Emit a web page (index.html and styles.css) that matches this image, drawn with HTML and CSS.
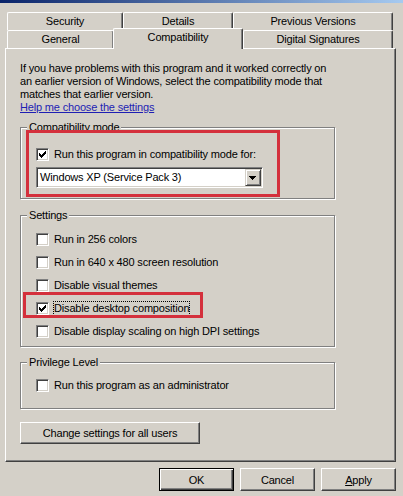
FILE: index.html
```html
<!DOCTYPE html>
<html>
<head>
<meta charset="utf-8">
<link rel="stylesheet" href="styles.css">
</head>
<body>
<div class="titlebar"></div>
<div class="dialog">
  <div class="tabs">
    <div class="tabrow">
      <div class="tab t-sec">Security</div>
      <div class="tab t-det">Details</div>
      <div class="tab t-prev">Previous Versions</div>
    </div>
    <div class="tabrow">
      <div class="tab t-gen">General</div>
      <div class="tab t-comp selected">Compatibility</div>
      <div class="tab t-dig">Digital Signatures</div>
    </div>
  </div>
  <div class="panel">
    <p class="intro">If you have problems with this program and it worked correctly on<br>an earlier version of Windows, select the compatibility mode that<br>matches that earlier version.</p>
    <a class="link">Help me choose the settings</a>

    <fieldset class="group g-compat">
      <legend>Compatibility mode</legend>
      <div class="check">
        <span class="cb"><svg width="11" height="11" viewBox="0 0 11 11" shape-rendering="crispEdges"><path d="M2 4h1v1h1v1h1v-1h1v-1h1v-1h1v-1h1v3h-1v1h-1v1h-1v1h-1v1h-1v-1h-1v-1h-1z" fill="#000"/></svg></span>
        <span class="lbl">Run this program in compatibility mode for:</span>
      </div>
      <div class="combo">
        <span class="combo-text">Windows XP (Service Pack 3)</span>
        <span class="drop"><svg width="7" height="4" viewBox="0 0 7 4" shape-rendering="crispEdges"><path d="M0 0h7v1h-1v1h-1v1h-1v1h-1v-1h-1v-1h-1v-1h-1z" fill="#000"/></svg></span>
      </div>
    </fieldset>

    <fieldset class="group g-settings">
      <legend>Settings</legend>
      <div class="check"><span class="cb"></span><span class="lbl">Run in 256 colors</span></div>
      <div class="check"><span class="cb"></span><span class="lbl">Run in 640 x 480 screen resolution</span></div>
      <div class="check"><span class="cb"></span><span class="lbl">Disable visual themes</span></div>
      <div class="check"><span class="cb"><svg width="11" height="11" viewBox="0 0 11 11" shape-rendering="crispEdges"><path d="M2 4h1v1h1v1h1v-1h1v-1h1v-1h1v-1h1v3h-1v1h-1v1h-1v1h-1v1h-1v-1h-1v-1h-1z" fill="#000"/></svg></span><span class="lbl focus">Disable desktop composition</span></div>
      <div class="check"><span class="cb"></span><span class="lbl">Disable display scaling on high DPI settings</span></div>
    </fieldset>

    <fieldset class="group g-priv">
      <legend>Privilege Level</legend>
      <div class="check"><span class="cb"></span><span class="lbl">Run this program as an administrator</span></div>
    </fieldset>

    <button class="btn btn-all">Change settings for all users</button>
  </div>
  <div class="footer">
    <button class="btn btn-dlg default">OK</button>
    <button class="btn btn-dlg">Cancel</button>
    <button class="btn btn-dlg"><u>A</u>pply</button>
  </div>
</div>
<div class="mark mark-1"></div>
<div class="mark mark-2"></div>
</body>
</html>
```
FILE: styles.css
```css
* { box-sizing: border-box; }
html, body { margin: 0; padding: 0; }
body {
  width: 403px;
  height: 496px;
  overflow: hidden;
  position: relative;
  background: #d4d0c8;
  font-family: "Liberation Sans", Arial, sans-serif;
  font-size: 11px;
  letter-spacing: -0.17px;
  color: #000;
}
.titlebar {
  height: 3px;
  background: linear-gradient(to right, #0a246a, #a6caf0);
}
.dialog { padding: 9px 7px 0 5px; }

/* tabs */
.tabs { margin-left: 2px; }
.tabrow { display: flex; height: 18px; }
.tab {
  height: 18px;
  border-top: 1px solid #fff;
  border-left: 1px solid #fff;
  border-right: 1px solid #404040;
  box-shadow: inset -1px 0 0 #808080;
  border-radius: 2px 2px 0 0;
  text-align: center;
  line-height: 17px;
  white-space: nowrap;
  background: #d4d0c8;
}
.t-sec { width: 116px; }
.t-det { width: 110px; }
.t-prev { width: 160px; }
.t-gen { width: 107px; }
.t-comp { width: 130px; margin-left: -1px; }
.t-dig { width: 150px; }
.selected {
  position: relative;
  z-index: 1;
  height: 21px;
  margin-top: -2px;
}

/* panel */
.panel {
  width: 391px;
  height: 414px;
  border: 1px solid;
  border-color: #fff #404040 #404040 #fff;
  box-shadow: inset -1px -1px 0 #808080;
  padding: 13px 0 0 14px;
}
.intro { margin: 0; line-height: 13px; }
.link {
  display: block;
  line-height: 13px;
  color: #1e1eb4;
  text-decoration: underline;
  width: max-content;
}

/* group boxes */
.group {
  width: 315px;
  min-width: 0;
  margin: 0;
  border: 1px solid #808080;
  box-shadow: inset 1px 1px 0 #fff, 1px 1px 0 #fff;
  padding: 0 0 0 15px;
}
.group legend {
  padding: 0 2px;
  margin-left: -9px;
  line-height: 13px;
  background: #d4d0c8;
}
.g-compat { margin-top: 7px; padding-top: 14px; padding-bottom: 10px; }
.g-settings { margin-top: 10px; padding-top: 11px; padding-bottom: 8px; display: flex; flex-direction: column; gap: 10px; }
.g-priv { margin-top: 9px; padding-top: 10px; padding-bottom: 16px; }

.check { display: flex; align-items: center; height: 13px; gap: 5px; }
.lbl { line-height: 13px; white-space: nowrap; }
.focus { outline: 1px dotted #000; outline-offset: 0; }
.cb {
  width: 13px;
  height: 13px;
  flex: none;
  background: #fff;
  border: 1px solid;
  border-color: #808080 #fff #fff #808080;
  box-shadow: inset 1px 1px 0 #404040, inset -1px -1px 0 #d4d0c8;
}
.cb svg { display: block; }

/* combo */
.combo {
  margin-top: 6px;
  width: 227px;
  height: 21px;
  background: #fff;
  border: 1px solid;
  border-color: #808080 #fff #fff #808080;
  box-shadow: inset 1px 1px 0 #404040, inset -1px -1px 0 #d4d0c8;
  padding: 1px;
  display: flex;
  align-items: stretch;
}
.combo-text { flex: 1; padding-left: 2px; line-height: 17px; }
.drop {
  width: 16px;
  background: #d4d0c8;
  border: 1px solid;
  border-color: #d4d0c8 #404040 #404040 #d4d0c8;
  box-shadow: inset 1px 1px 0 #fff, inset -1px -1px 0 #808080;
  display: flex;
  align-items: center;
  justify-content: center;
}
.drop svg { display: block; margin-left: -1px; }

/* buttons */
.btn {
  font-family: inherit;
  font-size: 11px;
  letter-spacing: -0.17px;
  color: #000;
  background: #d4d0c8;
  border: 1px solid;
  border-color: #fff #404040 #404040 #fff;
  box-shadow: inset -1px -1px 0 #808080;
  padding: 0;
  margin: 0;
  text-align: center;
  display: block;
}
.btn-all { margin-top: 13px; width: 180px; height: 22px; }
.footer {
  width: 391px;
  margin-top: 6px;
  display: flex;
  justify-content: flex-end;
  gap: 6px;
}
.btn-dlg { width: 75px; height: 23px; }
.default {
  border: 1px solid #000;
  box-shadow: inset 1px 1px 0 #fff, inset -1px -1px 0 #404040, inset -2px -2px 0 #808080;
}

/* annotation marks */
.mark { position: absolute; border: 3px solid #d4303c; }
.mark-1 { left: 26px; top: 130px; width: 254px; height: 67px; }
.mark-2 { left: 23px; top: 292px; width: 180px; height: 26px; }
```
